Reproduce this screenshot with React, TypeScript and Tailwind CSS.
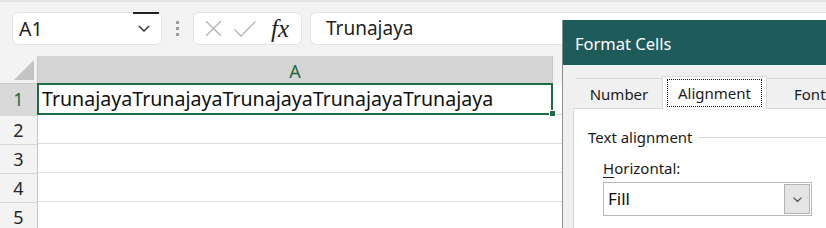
import type { ReactNode } from "react";

const rows = [1, 2, 3, 4, 5];

function Chevron({ className }: { className?: string }) {
    return (
        <svg viewBox="0 0 12 8" className={className} fill="none" stroke="currentColor" strokeWidth={1.3}>
            <path d="M1.5 1.8 6 6.2l4.5-4.4" />
        </svg>
    );
}

function FormulaBar() {
    return (
        <div className="flex h-[33px] items-stretch pl-[12px]">
            {/* name box */}
            <div className="relative flex w-[150px] items-center justify-between rounded-[6px] border border-[#e3e3e3] bg-white pl-[6px] pr-[10px]">
                <span className="text-[19.5px] text-[#1f1f1f]">A1</span>
                <Chevron className="h-[9px] w-[14px] text-[#333]" />
                <span className="absolute right-[2px] top-[-1px] h-[1.5px] w-[26px] bg-[#222]" />
            </div>
            <div className="flex w-[31px] flex-col items-center justify-center gap-[3px]">
                <span className="size-[3px] bg-[#9a9a9a]" />
                <span className="size-[3px] bg-[#9a9a9a]" />
                <span className="size-[3px] bg-[#9a9a9a]" />
            </div>
            <div className="flex w-[109px] items-center rounded-[6px] border border-[#e3e3e3] bg-white pl-[9px]">
                <svg viewBox="0 0 20 20" className="h-[21px] w-[21px] text-[#b4b4b4]" fill="none" stroke="currentColor" strokeWidth={1.3}>
                    <path d="M3 3l14 14M17 3 3 17" />
                </svg>
                <svg viewBox="0 0 24 20" className="ml-[9px] h-[20px] w-[24px] text-[#b4b4b4]" fill="none" stroke="currentColor" strokeWidth={1.3}>
                    <path d="M1.5 10.5 8 17 22.5 2.5" />
                </svg>
                <span
                    className="ml-[14px] text-[25px] italic leading-none text-[#222]"
                    style={{ fontFamily: '"Liberation Serif", "DejaVu Serif", serif' }}
                >
                    fx
                </span>
            </div>
            <div className="ml-[8px] flex flex-1 items-center rounded-l-[6px] border border-r-0 border-[#e3e3e3] bg-white pl-[15px]">
                <span className="text-[19px] text-[#1f1f1f]">Trunajaya</span>
            </div>
        </div>
    );
}

function Grid() {
    return (
        <div className="flex">
            {/* row headers */}
            <div className="flex w-[38px] flex-col border-r border-[#c8c8c8]">
                <div className="relative h-[27px] bg-[#f3f3f3]">
                    <svg viewBox="0 0 10 10" className="absolute bottom-[3px] right-[3px] h-[20px] w-[20px]">
                        <path d="M10 0v10H0z" fill="#c4c4c4" />
                    </svg>
                </div>
                {rows.map((r) => (
                    <div
                        key={r}
                        className={
                            r === 1
                                ? "flex h-[32px] items-center justify-center border-t border-[#c8c8c8] bg-[#d9d9d9] text-[18px] text-[#1d6b41]"
                                : "flex h-[29px] items-center justify-center border-t border-[#d6d6d6] bg-[#f3f3f3] text-[18px] text-[#262626]"
                        }
                    >
                        {r}
                    </div>
                ))}
            </div>
            {/* column A */}
            <div className="flex w-[514px] flex-col">
                <div className="flex h-[27px] items-end justify-center bg-[#d4d4d4] pb-[3px] text-[18px] leading-none text-[#1d6b41]">
                    A
                </div>
                <div className="relative -ml-[1px] -mr-[1px] flex h-[32px] items-center border-2 border-[#1e6c44] bg-white pl-[3px]">
                    <span className="whitespace-nowrap text-[19.6px] leading-none text-[#111]">
                        TrunajayaTrunajayaTrunajayaTrunajayaTrunajaya
                    </span>
                    <span className="absolute -bottom-[4px] -right-[5px] size-[7px] border border-white bg-[#1e6c44]" />
                </div>
                {rows.slice(1).map((r) => (
                    <div key={r} className="h-[29px] border-b border-[#dedede] bg-white" />
                ))}
            </div>
            {/* column B, mostly behind the dialog */}
            <div className="flex flex-1 flex-col">
                <div className="h-[27px] border-l border-[#c8c8c8] bg-[#f3f3f3]" />
                <div className="h-[32px] border-b border-[#dedede] bg-white" />
                {rows.slice(1).map((r) => (
                    <div key={r} className="h-[29px] border-b border-[#dedede] bg-white" />
                ))}
            </div>
        </div>
    );
}

function Tab({ children, active }: { children: ReactNode; active?: boolean }) {
    if (active) {
        return (
            <div className="relative z-10 -mt-[2px] flex h-[33px] w-[105px] items-start justify-center border border-b-0 border-[#d9d9d9] bg-white pt-[2px]">
                <span className="flex h-[28px] w-[95px] items-center justify-center border border-dotted border-[#111] text-[15px] text-[#1a1a1a]">
                    {children}
                </span>
            </div>
        );
    }
    return (
        <div className="flex h-[31px] w-[86px] items-center justify-center border-t border-[#d9d9d9] text-[15px] text-[#1a1a1a]">
            {children}
        </div>
    );
}

function FormatCellsDialog() {
    return (
        <div className="absolute left-[562px] top-[20px] flex h-[240px] w-[300px] flex-col border-l border-[#8c8c8c] bg-[#f0f0f0]">
            <div className="flex h-[45px] shrink-0 items-center bg-[#1e5b5b] pl-[12px] pt-[3px] text-[16.5px] text-white">
                Format Cells
            </div>
            <div className="flex flex-col pl-[10px] pt-[13px]">
                <div className="flex items-end pl-[3px]">
                    <Tab>Number</Tab>
                    <Tab active>Alignment</Tab>
                    <div className="flex h-[31px] flex-1 items-center border-t border-[#d9d9d9] pl-[27px] text-[15px] text-[#1a1a1a]">
                        Font
                    </div>
                </div>
                <div className="-mt-[1px] flex flex-1 flex-col border border-[#d9d9d9] bg-white pl-[14px] pt-[17px]">
                    <div className="flex items-center gap-[5px]">
                        <span className="text-[15px] text-[#1a1a1a]">Text alignment</span>
                        <span className="h-px flex-1 bg-[#d9d9d9]" />
                    </div>
                    <div className="mt-[8px] pl-[15px] text-[15px] text-[#1a1a1a]">
                        <span className="underline underline-offset-[3px]">H</span>orizontal:
                    </div>
                    <div className="ml-[15px] mt-[3px] flex h-[34px] w-[209px] items-center justify-between border border-[#b9b9b9] bg-white pl-[4px] pr-[1px]">
                        <span className="text-[17px] text-[#111]">Fill</span>
                        <span className="flex h-[30px] w-[26px] items-center justify-center border border-[#b3b3b3] bg-[#e4e4e4]">
                            <Chevron className="h-[7px] w-[11px] text-[#444]" />
                        </span>
                    </div>
                    <div className="mt-[7px] pl-[15px] text-[15px] text-[#1a1a1a]">Vertical:</div>
                </div>
            </div>
        </div>
    );
}

export default function App() {
    return (
        <div
            className="relative h-[228px] w-[826px] overflow-hidden bg-[#f3f3f3]"
            style={{ fontFamily: '"Noto Sans", "Open Sans", sans-serif' }}
        >
            <div className="h-[2px] bg-[#e2e2e2]" />
            <div className="pt-[10px]">
                <FormulaBar />
            </div>
            <div className="mt-[11px]">
                <Grid />
            </div>
            <FormatCellsDialog />
        </div>
    );
}
